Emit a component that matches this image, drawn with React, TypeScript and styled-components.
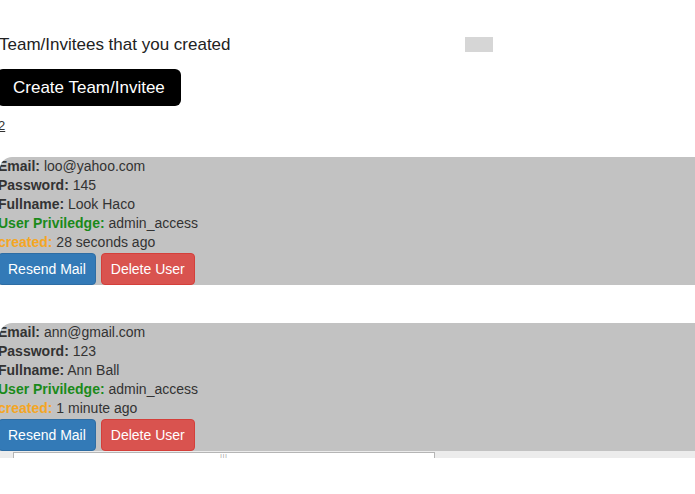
import styled, { createGlobalStyle } from "styled-components";

type Invitee = {
  email: string;
  password: string;
  fullname: string;
  privilege: string;
  created: string;
};

const invitees: Invitee[] = [
  {
    email: "loo@yahoo.com",
    password: "145",
    fullname: "Look Haco",
    privilege: "admin_access",
    created: "28 seconds ago",
  },
  {
    email: "ann@gmail.com",
    password: "123",
    fullname: "Ann Ball",
    privilege: "admin_access",
    created: "1 minute ago",
  },
];

function App() {
  return (
    <>
      <GlobalStyle />
      <Page>
        <HeaderRow>
          <Heading>Team/Invitees that you created</Heading>
          <Placeholder />
        </HeaderRow>

        <CreateButton>Create Team/Invitee</CreateButton>

        <Count href="#">2</Count>

        <List>
          {invitees.map((user) => (
            <Card key={user.email}>
              <Line>
                <Label>Email:</Label> {user.email}
              </Line>
              <Line>
                <Label>Password:</Label> {user.password}
              </Line>
              <Line>
                <Label>Fullname:</Label> {user.fullname}
              </Line>
              <Line>
                <Label $color="#1a8a1a">User Priviledge:</Label> {user.privilege}
              </Line>
              <Line>
                <Label $color="#f5a623">created:</Label> {user.created}
              </Line>
              <Actions>
                <ActionButton $bg="#337ab7" $border="#2e6da4">
                  Resend Mail
                </ActionButton>
                <ActionButton $bg="#d9534f" $border="#d43f3a">
                  Delete User
                </ActionButton>
              </Actions>
            </Card>
          ))}
        </List>

        <ScrollStrip>
          <ScrollTrack>
            <Grip>|||</Grip>
          </ScrollTrack>
        </ScrollStrip>
      </Page>
    </>
  );
}

export default App;

/*Styled Components*/

const GlobalStyle = createGlobalStyle`
  html, body {
    margin: 0;
    padding: 0;
    background: #fff;
    overflow: hidden;
  }
  body {
    font-family: "Liberation Sans", Arial, sans-serif;
    color: #333;
  }
`;

const Page = styled.div`
  width: 695px;
  height: 494px;
  padding-top: 34px;
  box-sizing: border-box;
`;

const HeaderRow = styled.div`
  display: flex;
  align-items: center;
  height: 21px;
`;

const Heading = styled.h4`
  margin: 0 0 0 -1px;
  width: 466px;
  font-size: 17px;
  font-weight: normal;
  color: #222;
  line-height: 21px;
`;

const Placeholder = styled.div`
  width: 28px;
  height: 15px;
  background: #d6d6d6;
`;

const CreateButton = styled.button`
  display: block;
  margin: 14px 0 0 -3px;
  height: 37px;
  padding: 0 16px;
  background: #000;
  color: #fff;
  border: none;
  border-radius: 6px;
  font-family: "Liberation Sans", Arial, sans-serif;
  font-size: 17px;
  cursor: pointer;
`;

const Count = styled.a`
  display: block;
  margin: 12px 0 0 -2px;
  font-size: 13px;
  line-height: 16px;
  color: #333;
  text-decoration: underline;
`;

const List = styled.div`
  display: flex;
  flex-direction: column;
  gap: 38px;
  margin-top: 23px;
`;

const Card = styled.div`
  background: #c2c2c2;
  border-radius: 12px 0 0 0;
  height: 128px;
  overflow: hidden;
`;

const Line = styled.div`
  margin-left: -2px;
  font-size: 14px;
  line-height: 19px;
  color: #333;
`;

const Label = styled.b<{ $color?: string }>`
  color: ${(p) => p.$color || "#333"};
`;

const Actions = styled.div`
  display: flex;
  gap: 5px;
  margin-top: 1px;
  margin-left: -2px;
`;

const ActionButton = styled.button<{ $bg: string; $border: string }>`
  height: 32px;
  padding: 0 9px;
  background: ${(p) => p.$bg};
  border: 1px solid ${(p) => p.$border};
  border-radius: 4px;
  color: #fff;
  font-family: "Liberation Sans", Arial, sans-serif;
  font-size: 14px;
  cursor: pointer;
`;

const ScrollStrip = styled.div`
  height: 7px;
  background: #ececec;
  display: flex;
  align-items: flex-end;
  padding-left: 13px;
`;

const ScrollTrack = styled.div`
  width: 420px;
  height: 5px;
  background: #fff;
  border: 1px solid #b5b5b5;
  border-bottom: none;
  display: flex;
  justify-content: center;
  overflow: hidden;
`;

const Grip = styled.span`
  font-size: 6px;
  line-height: 6px;
  color: #888;
  letter-spacing: 1px;
`;
